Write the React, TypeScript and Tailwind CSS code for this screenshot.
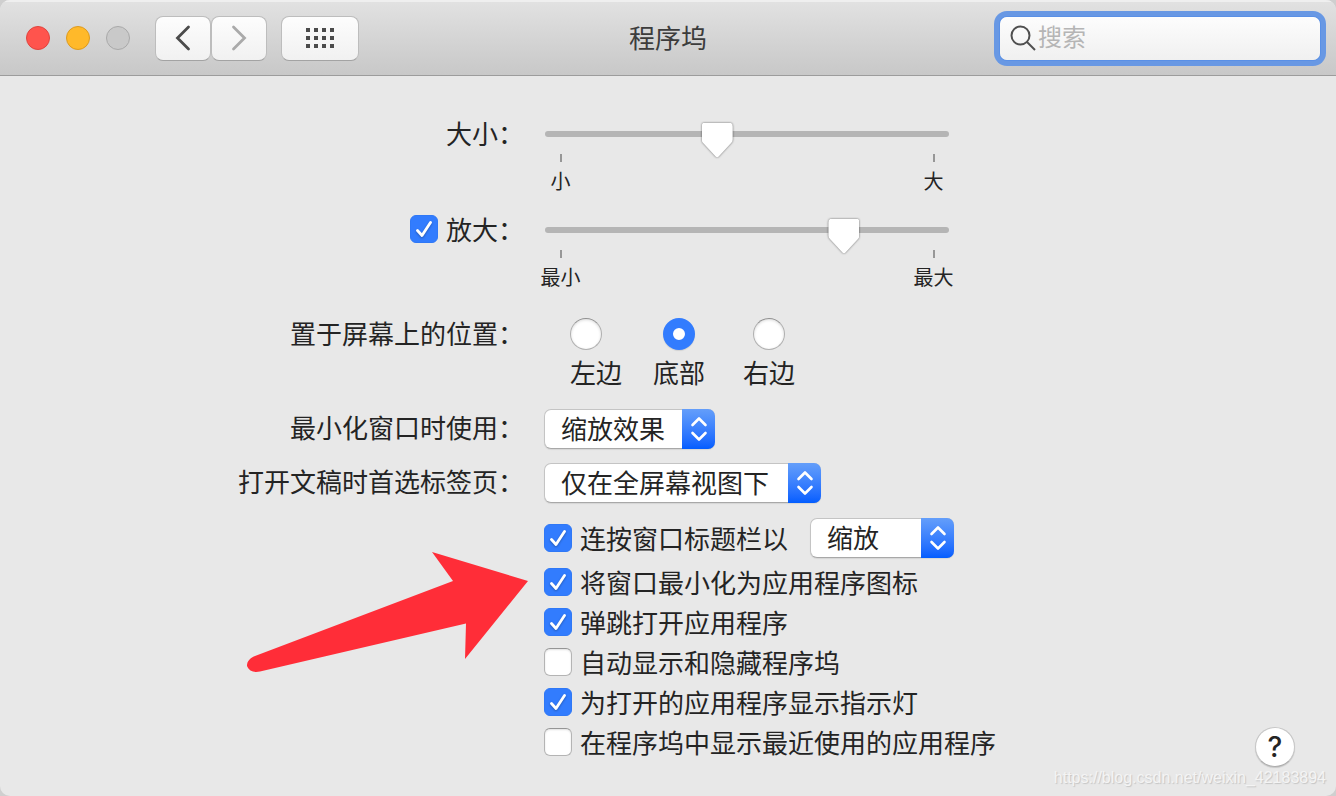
import type { ReactNode } from 'react'

const OPTIONS = [
  { id: 'minimize-to-icon', label: '将窗口最小化为应用程序图标', checked: true },
  { id: 'animate-open', label: '弹跳打开应用程序', checked: true },
  { id: 'auto-hide', label: '自动显示和隐藏程序坞', checked: false },
  { id: 'show-indicators', label: '为打开的应用程序显示指示灯', checked: true },
  { id: 'show-recents', label: '在程序坞中显示最近使用的应用程序', checked: false },
]

const POSITIONS = [
  { value: 'left', label: '左边', className: 'items-start pl-[26px]' },
  { value: 'bottom', label: '底部', className: 'items-center' },
  { value: 'right', label: '右边', className: 'items-center' },
]

const GRID_DOTS = [0, 8, 16, 24].flatMap((x) => [0, 8, 16].map((y) => ({ x, y })))

const TOOL_BUTTON =
  'flex h-[45px] items-center justify-center rounded-[8px] border border-[#bdbdbd] border-b-[#a3a3a3] bg-gradient-to-b from-[#fdfdfd] to-[#f1f1f1]'

function Checkbox({ id, checked }: { id: string; checked: boolean }) {
  return (
    <span className="relative block size-7 shrink-0">
      <input
        id={id}
        type="checkbox"
        defaultChecked={checked}
        className="peer block size-7 appearance-none rounded-[6px] border border-[#b4b4b4] border-t-[#959595] bg-white shadow-[inset_0_1px_2px_rgba(0,0,0,0.12)] checked:border-[#2f78f6] checked:bg-[#327cfe] checked:shadow-none"
      />
      <svg
        viewBox="0 0 28 28"
        className="pointer-events-none absolute inset-0 hidden size-7 drop-shadow-[0_1px_1px_rgba(0,0,0,0.3)] peer-checked:block"
        fill="none"
        stroke="#fff"
        strokeWidth="2.8"
        strokeLinecap="round"
        strokeLinejoin="round"
      >
        <path d="M7.5 15.5 L12 20.5 L20.5 7.5" />
      </svg>
    </span>
  )
}

function Popup({ id, value, className, label }: { id: string; value: string; className: string; label?: string }) {
  return (
    <span className={`relative block h-10 ${className}`}>
      <select
        id={id}
        aria-label={label}
        className="block h-10 w-full appearance-none rounded-[7px] border border-[#c4c4c4] border-b-[#a8a8a8] bg-white pb-0.5 pl-4 leading-9 shadow-[0_1px_1px_rgba(0,0,0,0.08)]"
      >
        <option>{value}</option>
      </select>
      <span className="pointer-events-none absolute inset-y-0 right-0 grid w-[33px] place-items-center rounded-r-[7px] bg-gradient-to-b from-[#649efa] to-[#025dff]">
        <svg
          width="18"
          height="26"
          viewBox="0 0 18 26"
          fill="none"
          stroke="#fff"
          strokeWidth="2.6"
          strokeLinecap="round"
          strokeLinejoin="round"
        >
          <path d="M2.5 9 L9 2.5 L15.5 9 M2.5 17 L9 23.5 L15.5 17" />
        </svg>
      </span>
    </span>
  )
}

function Slider({ id, value, min, max, label }: { id: string; value: number; min: string; max: string; label?: string }) {
  return (
    <div className="ml-px w-[404px] pt-[7px]">
      <div className="relative">
        <span className="absolute inset-x-0 top-[9px] h-1.5 rounded-full bg-[#b5b5b5]" />
        <input
          id={id}
          type="range"
          aria-label={label}
          min={0}
          max={1000}
          defaultValue={value}
          className="relative block h-9 w-full appearance-none bg-transparent drop-shadow-[0_0_1px_rgba(0,0,0,0.55)] [&::-webkit-slider-thumb]:h-[35px] [&::-webkit-slider-thumb]:w-[31px] [&::-webkit-slider-thumb]:appearance-none [&::-webkit-slider-thumb]:bg-white [&::-webkit-slider-thumb]:[clip-path:path('M4_0H27Q31_0_31_4V17Q31_19_29.5_20.6L17_34Q15.5_35.5_14_34L1.5_20.6Q0_19_0_17V4Q0_0_4_0Z')]"
        />
      </div>
      <div className="-mt-1 flex justify-between text-[20px] leading-6">
        {[min, max].map((text) => (
          <div key={text} className="flex w-[31px] flex-col items-center gap-[7px]">
            <span className="h-2 w-0.5 bg-[#979797]" />
            <span className="whitespace-nowrap">{text}</span>
          </div>
        ))}
      </div>
    </div>
  )
}

function Row({ label, className, children }: { label?: ReactNode; className: string; children: ReactNode }) {
  return (
    <div className={`grid grid-cols-[2fr_3fr] gap-4 ${className}`}>
      <div className="flex items-center justify-end gap-2 self-start whitespace-nowrap pr-1">{label}</div>
      {children}
    </div>
  )
}

function Toolbar() {
  return (
    <header className="grid h-[76px] grid-cols-[1fr_auto_1fr] items-center border-b border-[#9c9c9c] bg-gradient-to-b from-[#e2e2e2] to-[#c8c8c8] px-4 pt-px shadow-[inset_0_2px_0_#efefef]">
      <div className="flex items-center pl-2.5">
        <div className="flex gap-4">
          <button aria-label="关闭" className="size-6 rounded-full border border-[#e0443e] bg-[#ff544d]" />
          <button aria-label="最小化" className="size-6 rounded-full border border-[#dd9a1f] bg-[#ffb92a]" />
          <button aria-label="缩放窗口" className="size-6 rounded-full border border-[#a9a9a9] bg-[#c9c9c9]" />
        </div>
        <div className="ml-[25px] flex">
          <button aria-label="后退" className={`${TOOL_BUTTON} w-14`}>
            <svg width="16" height="26" viewBox="0 0 16 26" fill="none" stroke="#4b4b4b" strokeWidth="2.8" strokeLinecap="round">
              <path d="M13.5 2 L2.5 13 L13.5 24" />
            </svg>
          </button>
          <button aria-label="前进" className={`${TOOL_BUTTON} w-14`}>
            <svg width="16" height="26" viewBox="0 0 16 26" fill="none" stroke="#aaaaaa" strokeWidth="2.8" strokeLinecap="round">
              <path d="M2.5 2 L13.5 13 L2.5 24" />
            </svg>
          </button>
        </div>
        <button aria-label="显示全部" className={`${TOOL_BUTTON} ml-[14px] w-[78px]`}>
          <svg width="28" height="20" viewBox="0 0 28 20" fill="#4b4b4b">
            {GRID_DOTS.map((dot) => (
              <rect key={`${dot.x}-${dot.y}`} x={dot.x} y={dot.y} width="4" height="4" />
            ))}
          </svg>
        </button>
      </div>
      <h1 className="pb-0.5 text-[26px] leading-9 font-normal text-[#3c3c3c]">程序坞</h1>
      <label className="flex h-[43px] w-[320px] items-center justify-self-end rounded-[7px] bg-gradient-to-b from-[#fdfdfd] to-[#f0f0f0] pl-2.5 shadow-[0_0_0_1px_#5a90e6,0_0_0_6px_#6898e4]">
        <svg width="26" height="26" viewBox="0 0 26 26" fill="none" stroke="#4f4f4f" strokeWidth="2" className="shrink-0">
          <circle cx="10.5" cy="10.5" r="9" />
          <path d="M17 17 L25 25" />
        </svg>
        <input
          type="text"
          aria-label="搜索"
          placeholder="搜索"
          className="ml-0.5 w-full min-w-0 bg-transparent pb-1 text-[24px] leading-9 outline-none placeholder:text-[#b5b5b5]"
        />
      </label>
    </header>
  )
}

export default function App() {
  return (
    <div className="min-h-screen bg-[#cfcfcf] font-['Noto_Sans_CJK_SC',sans-serif] text-[#242424]">
      <div className="relative min-h-screen overflow-hidden rounded-[10px] bg-[#e8e8e8]">
        <Toolbar />
        <main className="pt-[39px] pb-7 text-[26px] leading-9">
          <Row className="" label={<label htmlFor="size">大小：</label>}>
            <Slider id="size" value={420} min="小" max="大" />
          </Row>

          <Row
            className="mt-[18px]"
            label={
              <>
                <Checkbox id="magnify" checked />
                <label htmlFor="magnify">放大：</label>
              </>
            }
          >
            <Slider id="magnify-size" value={760} min="最小" max="最大" label="放大" />
          </Row>

          <Row className="mt-[26px]" label={<span id="position">置于屏幕上的位置：</span>}>
            <div role="radiogroup" aria-labelledby="position" className="flex pt-[3px]">
              {POSITIONS.map((pos) => (
                <label key={pos.value} className={`flex w-[90px] flex-col gap-1 ${pos.className}`}>
                  <input
                    type="radio"
                    name="position"
                    value={pos.value}
                    defaultChecked={pos.value === 'bottom'}
                    className="size-8 appearance-none rounded-full border border-[#b0b0b0] border-t-[#909090] bg-white shadow-[inset_0_1px_3px_rgba(0,0,0,0.15)] checked:border-[10px] checked:border-[#327cfe] checked:shadow-[0_1px_1px_rgba(0,0,0,0.1)]"
                  />
                  <span>{pos.label}</span>
                </label>
              ))}
            </div>
          </Row>

          <Row className="mt-[19px]" label={<label htmlFor="effect">最小化窗口时使用：</label>}>
            <Popup id="effect" value="缩放效果" className="w-[171px]" />
          </Row>

          <Row className="mt-[14px]" label={<label htmlFor="tabs">打开文稿时首选标签页：</label>}>
            <Popup id="tabs" value="仅在全屏幕视图下" className="w-[277px]" />
          </Row>

          <Row className="mt-[15px]">
            <div className="flex items-end justify-between pr-[41px]">
              <div className="relative pb-[5px]">
                <div className="mb-1 flex h-10 items-center gap-2">
                  <Checkbox id="double-click" checked />
                  <label htmlFor="double-click">连按窗口标题栏以</label>
                  <Popup id="double-click-action" value="缩放" label="连按操作" className="ml-[14px] w-36" />
                </div>
                {OPTIONS.map((option) => (
                  <div key={option.id} className="flex h-10 items-center gap-2">
                    <Checkbox id={option.id} checked={option.checked} />
                    <label htmlFor={option.id} className="whitespace-nowrap">
                      {option.label}
                    </label>
                  </div>
                ))}
                {/* callout pointing at the minimize option */}
                <svg
                  width="281"
                  height="120"
                  viewBox="0 0 281 120"
                  fill="#ff2d38"
                  className="pointer-events-none absolute top-[34px] right-full mr-4"
                >
                  <path d="M281 29 L185 0 L206 29 L8 104 C3 106 0 109 0 114 C2 119 7 121 13 119.5 L219 71.5 L218 107 Z" />
                </svg>
              </div>
              <button
                aria-label="帮助"
                className="size-10 rounded-full border border-[#c6c6c6] border-b-[#adadad] bg-white font-['Inter',sans-serif] text-[28px] leading-9 font-medium shadow-[0_1px_1px_rgba(0,0,0,0.15)]"
              >
                ?
              </button>
            </div>
          </Row>
        </main>
        <p className="pointer-events-none absolute right-2.5 bottom-1.5 font-['Liberation_Sans',sans-serif] text-[16px] leading-6 text-[#f4f4f4] [text-shadow:1px_1px_1px_#c4c4c4]">
          https://blog.csdn.net/weixin_42183894
        </p>
      </div>
    </div>
  )
}
